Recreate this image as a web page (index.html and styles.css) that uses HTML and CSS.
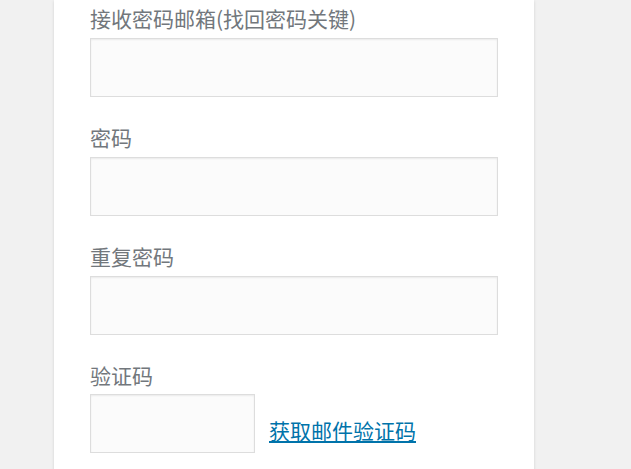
FILE: index.html
```html
<!DOCTYPE html>
<html lang="zh-CN">
<head>
<meta charset="utf-8">
<link rel="stylesheet" href="styles.css">
</head>
<body>
<div class="card">
  <div class="field">
    <label class="label">接收密码邮箱(找回密码关键)</label>
    <input class="input" type="text">
  </div>
  <div class="field">
    <label class="label">密码</label>
    <input class="input" type="password">
  </div>
  <div class="field">
    <label class="label">重复密码</label>
    <input class="input" type="password">
  </div>
  <div class="field">
    <label class="label tight">验证码</label>
    <div class="captcha">
      <input class="input small" type="text">
      <a class="link" href="#">获取邮件验证码</a>
    </div>
  </div>
</div>
</body>
</html>
```
FILE: styles.css
```css
html, body {
  margin: 0;
  padding: 0;
  background: #f1f1f1;
  height: 100%;
  overflow: hidden;
}
body {
  font-family: "Noto Sans CJK SC", "Noto Sans", sans-serif;
}
.card {
  margin-left: 54px;
  width: 408px;
  padding: 3px 36px 40px;
  background: #fff;
  box-shadow: 0 1px 3px rgba(0, 0, 0, 0.13);
  min-height: 500px;
}
.field {
  display: flex;
  flex-direction: column;
}
.label {
  display: block;
  font-size: 21px;
  line-height: 30px;
  color: #72777c;
  margin-bottom: 5px;
}
.label.tight {
  margin-bottom: 4px;
}
.input {
  box-sizing: border-box;
  width: 408px;
  height: 59px;
  margin: 0 0 25px 0;
  padding: 3px;
  border: 1px solid #ddd;
  background: #fbfbfb;
  box-shadow: inset 0 1px 2px rgba(0, 0, 0, 0.07);
  font-size: 24px;
  outline: none;
}
.captcha {
  display: flex;
  align-items: flex-end;
  gap: 14px;
}
.input.small {
  width: 165px;
}
.link {
  font-size: 21px;
  line-height: 30px;
  color: #0073aa;
  text-decoration: underline;
  margin-bottom: 33px;
}
```
